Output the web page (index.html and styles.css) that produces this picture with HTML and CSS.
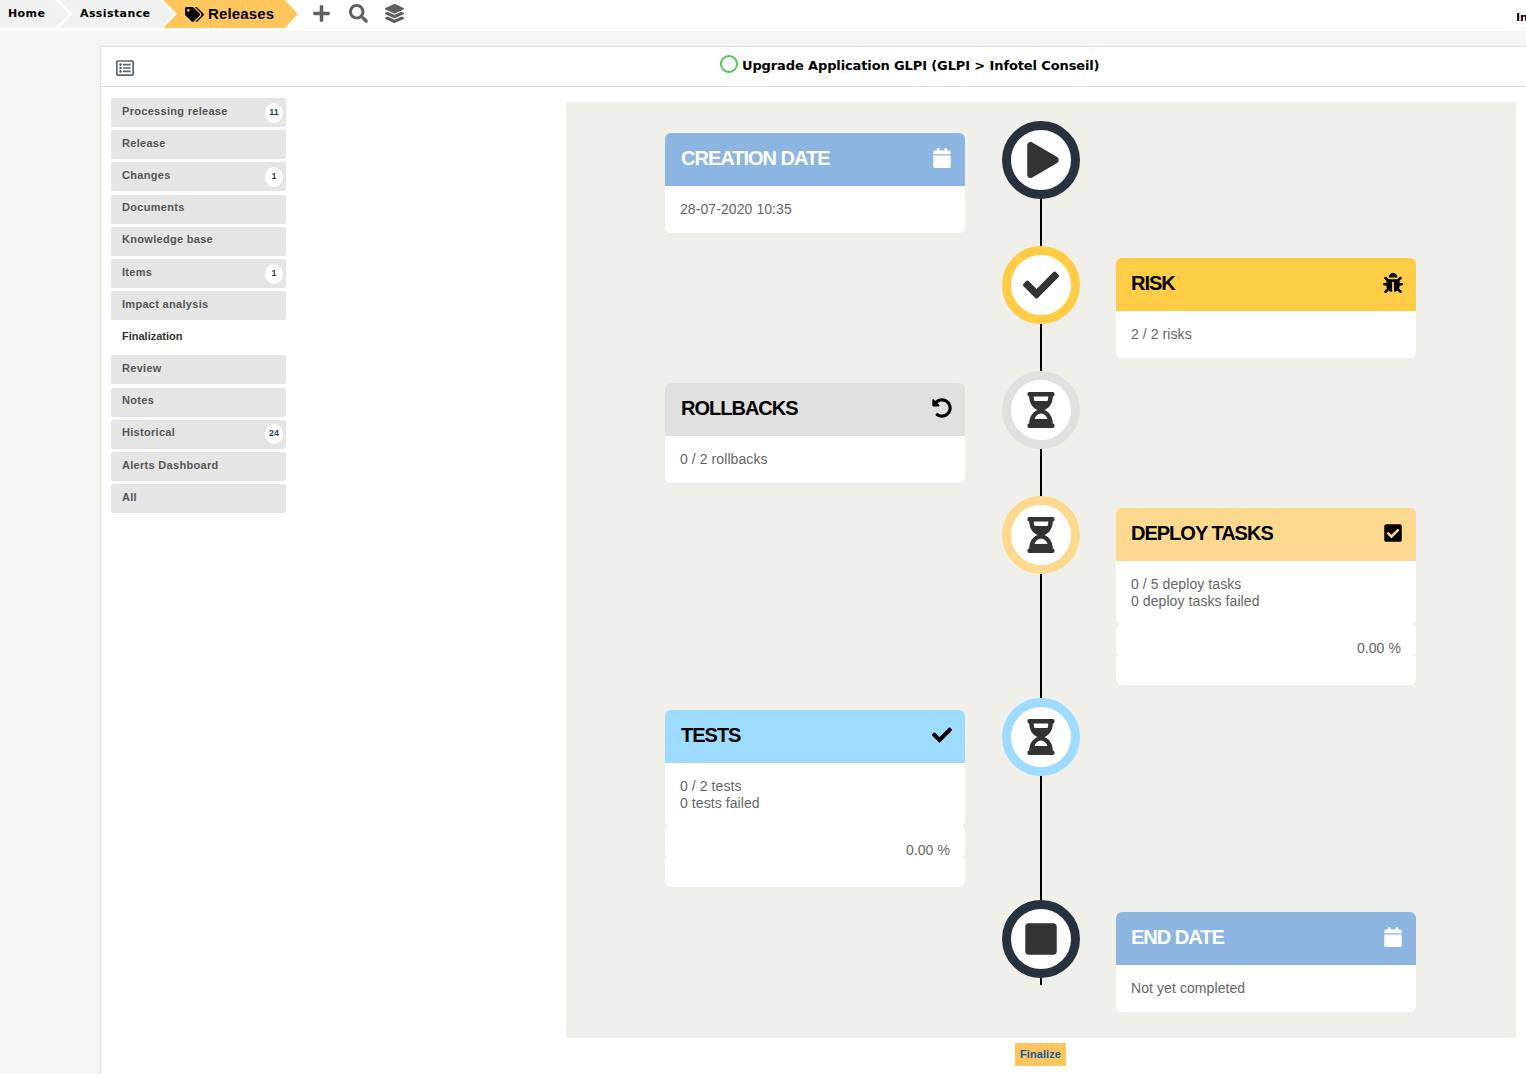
FILE: index.html
```html
<!DOCTYPE html>
<html lang="en">
<head>
    <meta charset="UTF-8">
    <title>Releases - Upgrade Application GLPI</title>
    <link rel="stylesheet" href="styles.css">
</head>
<body>
    <!-- Icon shapes used across the page -->
    <svg class="sprites" xmlns="http://www.w3.org/2000/svg">
        <symbol id="i-calendar" viewBox="0 0 448 512"><path d="M12 192h424c6.6 0 12 5.4 12 12v260c0 26.5-21.5 48-48 48H48c-26.5 0-48-21.5-48-48V204c0-6.6 5.4-12 12-12zm436-44v-36c0-26.5-21.5-48-48-48h-48V12c0-6.6-5.4-12-12-12h-40c-6.6 0-12 5.4-12 12v52H160V12c0-6.6-5.4-12-12-12h-40c-6.6 0-12 5.4-12 12v52H48C21.5 64 0 85.5 0 112v36c0 6.6 5.4 12 12 12h424c6.6 0 12-5.4 12-12z"/></symbol>
        <symbol id="i-check" viewBox="0 0 512 512"><path d="M173.898 439.404l-166.4-166.4c-9.997-9.997-9.997-26.206 0-36.204l36.203-36.204c9.997-9.998 26.207-9.998 36.204 0L192 312.69 432.095 72.596c9.997-9.997 26.207-9.997 36.204 0l36.203 36.204c9.997 9.997 9.997 26.206 0 36.204l-294.4 294.401c-9.998 9.997-26.207 9.997-36.204-.001z"/></symbol>
        <symbol id="i-play" viewBox="0 0 448 512"><path d="M424.4 214.7L72.4 6.6C43.8-10.3 0 6.1 0 47.9V464c0 37.5 40.7 60.1 72.4 41.3l352-208c31.4-18.5 31.5-64.1 0-82.6z"/></symbol>
        <symbol id="i-hourglass" viewBox="0 0 384 512"><path fill-rule="evenodd" d="M360 0H24C10.745 0 0 10.745 0 24v16c0 13.255 10.745 24 24 24 0 90.965 51.016 167.734 120.842 192C75.016 280.266 24 357.035 24 448c-13.255 0-24 10.745-24 24v16c0 13.255 10.745 24 24 24h336c13.255 0 24-10.745 24-24v-16c0-13.255-10.745-24-24-24 0-90.965-51.016-167.734-120.842-192C308.984 231.734 360 154.965 360 64c13.255 0 24-10.745 24-24V24c0-13.255-10.745-24-24-24zm-75.078 384H99.08c17.059-46.797 52.096-80 92.92-80 40.821 0 75.862 33.196 92.922 80zm.019-256H99.078C91.988 108.548 88 86.748 88 64h208c0 22.805-3.987 44.587-11.059 64z"/></symbol>
        <symbol id="i-stop" viewBox="0 0 448 512"><path d="M400 32H48C21.5 32 0 53.5 0 80v352c0 26.5 21.5 48 48 48h352c26.5 0 48-21.5 48-48V80c0-26.5-21.5-48-48-48z"/></symbol>
        <symbol id="i-bug" viewBox="0 0 512 512"><path d="M511.988 288.9c-.478 17.43-15.217 31.1-32.653 31.1H424v16c0 21.864-4.882 42.584-13.6 61.145l60.228 60.228c12.496 12.497 12.496 32.758 0 45.255-12.498 12.497-32.759 12.496-45.256 0l-54.736-54.736C345.886 467.965 314.351 480 280 480V236c0-6.627-5.373-12-12-12h-24c-6.627 0-12 5.373-12 12v244c-34.351 0-65.886-12.035-90.636-32.108l-54.736 54.736c-12.498 12.497-32.759 12.496-45.256 0-12.496-12.497-12.496-32.758 0-45.255l60.228-60.228C92.882 378.584 88 357.864 88 336v-16H32.666C15.23 320 .491 306.33.013 288.9-.484 270.816 14.028 256 32 256h56v-58.745l-46.628-46.628c-12.496-12.497-12.496-32.758 0-45.255 12.498-12.497 32.758-12.497 45.256 0L141.255 160h229.489l54.627-54.627c12.498-12.497 32.758-12.497 45.256 0 12.496 12.497 12.496 32.758 0 45.255L424 197.255V256h56c17.972 0 32.484 14.816 31.988 32.9zM257 0c-61.856 0-112 50.144-112 112h224C369 50.144 318.856 0 257 0z"/></symbol>
        <symbol id="i-undo" viewBox="0 0 512 512"><path d="M255.545 8c-66.269.119-126.438 26.233-170.86 68.685L48.971 40.971C33.851 25.851 8 36.559 8 57.941V192c0 13.255 10.745 24 24 24h134.059c21.382 0 32.09-25.851 16.971-40.971l-41.75-41.75c30.864-28.899 70.801-44.907 113.23-45.273 92.398-.798 170.283 73.977 169.484 169.442C423.236 348.009 349.816 424 256 424c-41.127 0-79.997-14.678-110.63-41.556-4.743-4.161-11.906-3.908-16.368.553L89.34 422.659c-4.872 4.872-4.631 12.815.482 17.433C133.798 479.813 192.074 504 256 504c136.966 0 247.999-111.033 248-247.998C504.001 119.193 392.354 7.755 255.545 8z"/></symbol>
        <symbol id="i-checksquare" viewBox="0 0 448 512"><path fill-rule="evenodd" d="M400 480H48c-26.51 0-48-21.49-48-48V80c0-26.51 21.49-48 48-48h352c26.51 0 48 21.49 48 48v352c0 26.51-21.49 48-48 48zm-204.686-98.059l184-184c6.248-6.248 6.248-16.379 0-22.627l-22.627-22.627c-6.248-6.248-16.379-6.249-22.628 0L184 302.745l-69.059-69.059c-6.248-6.248-16.379-6.248-22.628 0L69.686 256.313c-6.248 6.248-6.248 16.379 0 22.627l104 104c6.249 6.25 16.379 6.25 22.628.001z"/></symbol>
        <symbol id="i-tags" viewBox="0 0 640 512"><path d="M497.941 225.941L286.059 14.059A48 48 0 0 0 252.118 0H48C21.49 0 0 21.49 0 48v204.118a48 48 0 0 0 14.059 33.941l211.882 211.882c18.744 18.745 49.136 18.746 67.882 0l204.118-204.118c18.745-18.745 18.745-49.137 0-67.882zM112 160c-26.51 0-48-21.49-48-48s21.49-48 48-48 48 21.49 48 48-21.49 48-48 48zm513.941 133.823L421.823 497.941c-18.745 18.745-49.137 18.745-67.882 0l-.36-.36L527.64 323.522c16.999-16.999 26.36-39.6 26.36-63.64s-9.362-46.641-26.36-63.64L331.397 0h48.721a48 48 0 0 1 33.941 14.059l211.882 211.882c18.745 18.745 18.745 49.137 0 67.882z"/></symbol>
        <symbol id="i-plus" viewBox="0 0 448 512"><path d="M416 208H272V64c0-17.67-14.33-32-32-32h-32c-17.67 0-32 14.33-32 32v144H32c-17.67 0-32 14.33-32 32v32c0 17.67 14.33 32 32 32h144v144c0 17.67 14.33 32 32 32h32c17.67 0 32-14.33 32-32V304h144c17.67 0 32-14.33 32-32v-32c0-17.67-14.33-32-32-32z"/></symbol>
        <symbol id="i-search" viewBox="0 0 512 512"><path d="M505 442.7L405.3 343c-4.5-4.5-10.6-7-17-7H372c27.6-35.3 44-79.7 44-128C416 93.1 322.9 0 208 0S0 93.1 0 208s93.1 208 208 208c48.3 0 92.7-16.4 128-44v16.3c0 6.4 2.5 12.5 7 17l99.7 99.7c9.4 9.4 24.6 9.4 33.9 0l28.3-28.3c9.4-9.4 9.4-24.6.1-34zM208 336c-70.7 0-128-57.2-128-128 0-70.7 57.2-128 128-128 70.7 0 128 57.2 128 128 0 70.7-57.2 128-128 128z"/></symbol>
        <symbol id="i-layers" viewBox="0 0 512 512"><path d="M12.41 148.02l232.94 105.67c6.8 3.09 14.49 3.09 21.29 0l232.94-105.67c16.55-7.51 16.55-32.52 0-40.03L266.65 2.31a25.607 25.607 0 0 0-21.29 0L12.41 107.98c-16.55 7.51-16.55 32.53 0 40.04zm487.18 88.28l-58.09-26.33-161.64 73.27c-7.56 3.43-15.59 5.17-23.86 5.17s-16.29-1.74-23.86-5.17L70.51 209.97l-58.1 26.33c-16.55 7.5-16.55 32.5 0 40l232.94 105.59c6.8 3.08 14.49 3.08 21.29 0L499.59 276.3c16.55-7.5 16.55-32.5 0-40zm0 127.8l-57.87-26.23-161.86 73.37c-7.56 3.43-15.59 5.17-23.86 5.17s-16.29-1.74-23.86-5.17L70.29 337.87 12.41 364.1c-16.55 7.5-16.55 32.5 0 40l232.94 105.59c6.8 3.08 14.49 3.08 21.29 0L499.59 404.1c16.55-7.5 16.55-32.5 0-40z"/></symbol>
        <symbol id="i-list" viewBox="0 0 512 512"><path d="M464 32H48C21.49 32 0 53.49 0 80v352c0 26.51 21.49 48 48 48h416c26.51 0 48-21.49 48-48V80c0-26.51-21.49-48-48-48zm-6 400H54a6 6 0 0 1-6-6V86a6 6 0 0 1 6-6h404a6 6 0 0 1 6 6v340a6 6 0 0 1-6 6zm-42-92v24c0 6.627-5.373 12-12 12H204c-6.627 0-12-5.373-12-12v-24c0-6.627 5.373-12 12-12h200c6.627 0 12 5.373 12 12zm0-96v24c0 6.627-5.373 12-12 12H204c-6.627 0-12-5.373-12-12v-24c0-6.627 5.373-12 12-12h200c6.627 0 12 5.373 12 12zm0-96v24c0 6.627-5.373 12-12 12H204c-6.627 0-12-5.373-12-12v-24c0-6.627 5.373-12 12-12h200c6.627 0 12 5.373 12 12zm-252 12c0 19.882-16.118 36-36 36s-36-16.118-36-36 16.118-36 36-36 36 16.118 36 36zm0 96c0 19.882-16.118 36-36 36s-36-16.118-36-36 16.118-36 36-36 36 16.118 36 36zm0 96c0 19.882-16.118 36-36 36s-36-16.118-36-36 16.118-36 36-36 36 16.118 36 36z"/></symbol>
    </svg>

    <header class="topbar">
        <nav class="crumbs">
            <a class="crumb crumb-home">Home</a>
            <a class="crumb crumb-mid">Assistance</a>
            <a class="crumb crumb-active"><svg class="crumb-icon"><use href="#i-tags"/></svg>Releases</a>
        </nav>
        <div class="actions">
            <svg class="action"><use href="#i-plus"/></svg>
            <svg class="action"><use href="#i-search"/></svg>
            <svg class="action"><use href="#i-layers"/></svg>
        </div>
        <span class="entity">Infotel Conseil</span>
    </header>

    <main class="panel">
        <div class="panel-header">
            <svg class="list-icon"><use href="#i-list"/></svg>
            <span class="status-dot"></span>
            <h1 class="panel-title">Upgrade Application GLPI (GLPI &gt; Infotel Conseil)</h1>
        </div>
        <div class="panel-body">
            <ul class="tabs">
                <li class="tab">Processing release<span class="badge">11</span></li>
                <li class="tab">Release</li>
                <li class="tab">Changes<span class="badge">1</span></li>
                <li class="tab">Documents</li>
                <li class="tab">Knowledge base</li>
                <li class="tab">Items<span class="badge">1</span></li>
                <li class="tab">Impact analysis</li>
                <li class="tab tab-active">Finalization</li>
                <li class="tab">Review</li>
                <li class="tab">Notes</li>
                <li class="tab">Historical<span class="badge">24</span></li>
                <li class="tab">Alerts Dashboard</li>
                <li class="tab">All</li>
            </ul>
            <section class="content">
                <div class="timeline">
                    <div class="step">
                        <div class="card card-date">
                            <div class="card-head"><span class="card-title">CREATION DATE</span><svg class="head-icon"><use href="#i-calendar"/></svg></div>
                            <div class="card-text">28-07-2020 10:35</div>
                        </div>
                        <div class="node node-dark"><svg class="node-icon node-play"><use href="#i-play"/></svg></div>
                    </div>
                    <div class="step">
                        <div class="node node-risk"><svg class="node-icon"><use href="#i-check"/></svg></div>
                        <div class="card card-risk">
                            <div class="card-head"><span class="card-title">RISK</span><svg class="head-icon"><use href="#i-bug"/></svg></div>
                            <div class="card-text">2 / 2 risks</div>
                        </div>
                    </div>
                    <div class="step">
                        <div class="card card-rollback">
                            <div class="card-head"><span class="card-title">ROLLBACKS</span><svg class="head-icon"><use href="#i-undo"/></svg></div>
                            <div class="card-text">0 / 2 rollbacks</div>
                        </div>
                        <div class="node node-rollback"><svg class="node-icon"><use href="#i-hourglass"/></svg></div>
                    </div>
                    <div class="step">
                        <div class="node node-deploy"><svg class="node-icon"><use href="#i-hourglass"/></svg></div>
                        <div class="card card-deploy">
                            <div class="card-head"><span class="card-title">DEPLOY TASKS</span><svg class="head-icon"><use href="#i-checksquare"/></svg></div>
                            <div class="card-text">0 / 5 deploy tasks<br>0 deploy tasks failed</div>
                            <div class="card-percent">0.00 %</div>
                            <div class="card-foot"></div>
                        </div>
                    </div>
                    <div class="step">
                        <div class="card card-tests">
                            <div class="card-head"><span class="card-title">TESTS</span><svg class="head-icon"><use href="#i-check"/></svg></div>
                            <div class="card-text">0 / 2 tests<br>0 tests failed</div>
                            <div class="card-percent">0.00 %</div>
                            <div class="card-foot"></div>
                        </div>
                        <div class="node node-tests"><svg class="node-icon"><use href="#i-hourglass"/></svg></div>
                    </div>
                    <div class="step">
                        <div class="node node-dark"><svg class="node-icon"><use href="#i-stop"/></svg></div>
                        <div class="card card-date">
                            <div class="card-head"><span class="card-title">END DATE</span><svg class="head-icon"><use href="#i-calendar"/></svg></div>
                            <div class="card-text">Not yet completed</div>
                        </div>
                    </div>
                </div>
                <div class="finalize-row"><button class="finalize" type="button">Finalize</button></div>
            </section>
        </div>
    </main>
</body>
</html>
```

FILE: styles.css
```css
html, body {
    margin: 0;
    padding: 0;
    height: 100%;
    overflow: hidden;
}
body {
    font-family: "DejaVu Sans", Verdana, sans-serif;
    background-color: #f6f5f1;
    color: #000;
}
.sprites {
    display: none;
}

/* top navigation */
.topbar {
    display: flex;
    height: 31px;
    background: #fff;
    overflow: hidden;
}
.crumbs {
    display: flex;
    height: 28px;
}
.crumb {
    display: flex;
    align-items: center;
    height: 28px;
    box-sizing: border-box;
    font-weight: bold;
    font-size: 11px;
    letter-spacing: 0.4px;
    padding-bottom: 2px;
    background: #f1f1f1;
}
.crumb-home {
    width: 69px;
    padding-left: 8px;
    clip-path: polygon(0 0, 55px 0, 100% 50%, 55px 100%, 0 100%);
}
.crumb-mid {
    width: 115px;
    margin-left: -10px;
    padding-left: 21px;
    clip-path: polygon(0 0, 101px 0, 100% 50%, 101px 100%, 0 100%, 14px 50%);
}
.crumb-active {
    width: 135px;
    margin-left: -11px;
    padding-left: 22px;
    font-family: "Liberation Sans", Arial, sans-serif;
    font-size: 15px;
    letter-spacing: 0.15px;
    background: #ffc65d;
    clip-path: polygon(0 0, 122px 0, 100% 50%, 122px 100%, 0 100%, 14px 50%);
}
.crumb-icon {
    width: 19px;
    height: 15px;
    margin-right: 4px;
    margin-top: 2px;
}
.actions {
    display: flex;
    gap: 17.7px;
    margin-left: 14px;
    padding-top: 4px;
    height: 20px;
}
.action {
    width: 19px;
    height: 19px;
    fill: #5f5f5f;
}
.entity {
    width: 10px;
    margin-left: auto;
    padding-top: 11px;
    overflow: hidden;
    font-size: 11px;
    font-weight: bold;
    white-space: nowrap;
}

/* main panel */
.panel {
    margin: 15px 0 0 100px;
    height: 1028px;
    background: #fff;
    border-top: 1px solid #e2e2e2;
    border-left: 1px solid #e2e2e2;
}
.panel-header {
    display: flex;
    align-items: center;
    height: 39px;
    border-bottom: 1px solid #e2e2e2;
}
.list-icon {
    width: 18px;
    height: 18px;
    margin-left: 15px;
    margin-top: 2px;
    fill: #5c6670;
}
.status-dot {
    width: 14px;
    height: 14px;
    margin-left: 586px;
    margin-bottom: 6px;
    border: 2px solid #4cc95a;
    border-radius: 50%;
}
.panel-title {
    margin: 0 0 3px 4px;
    font-size: 13px;
    font-weight: bold;
    letter-spacing: -0.12px;
}
.panel-body {
    display: flex;
}

/* left tabs */
.tabs {
    list-style: none;
    width: 175px;
    margin: 10.95px 0 0 10px;
    padding: 0;
    font-family: "Liberation Sans", Arial, sans-serif;
    font-size: 11px;
    font-weight: bold;
    letter-spacing: 0.3px;
    color: #555;
}
.tab {
    display: flex;
    justify-content: space-between;
    height: 29px;
    box-sizing: border-box;
    margin-bottom: 3.19px;
    padding: 6.65px 3px 0 11px;
    line-height: 13px;
    background: #e5e5e5;
    border-radius: 2px;
}
.tab-active {
    background: #fff;
    color: #333;
    letter-spacing: 0;
}
.badge {
    width: 18px;
    height: 20px;
    margin-top: -2px;
    font-size: 9px;
    line-height: 18px;
    text-align: center;
    letter-spacing: 0;
    background: #fff;
    border-radius: 50%;
    color: #2f3f55;
}

/* timeline */
.content {
    width: 950px;
    margin: 15px 0 0 280px;
}
.timeline {
    position: relative;
    padding: 31px 0 26px 99px;
    background: #f0efea;
}
.timeline::before {
    content: "";
    position: absolute;
    left: 474px;
    top: 19px;
    bottom: 53px;
    width: 2px;
    background: #000;
}
.step {
    display: grid;
    grid-template-columns: 300px 151px 300px;
    margin-bottom: 25px;
}
.step:last-child {
    margin-bottom: 0;
}
.step > .card {
    grid-row: 1;
}
.step > .card-risk, .step > .card-deploy, .step:last-child > .card {
    grid-column: 3;
}
.step > .node {
    grid-column: 2;
    grid-row: 1;
}
.node {
    position: relative;
    display: flex;
    align-items: center;
    justify-content: center;
    justify-self: center;
    width: 60px;
    height: 60px;
    margin-top: -12px;
    background: #fff;
    border: 9px solid #28323e;
    border-radius: 50%;
}
.node-risk { border-color: #ffcd45; }
.node-rollback { border-color: #e0e0e0; }
.node-deploy { border-color: #fdd98f; }
.node-tests { border-color: #9edcff; }
.node-icon {
    width: 36px;
    height: 36px;
    fill: #333;
}
.node-play {
    margin-left: 4px;
}
.card {
    color: #666;
    font-family: "Liberation Sans", Arial, sans-serif;
    font-size: 14px;
    line-height: 17px;
    letter-spacing: 0.08px;
}
.card-head {
    display: flex;
    align-items: center;
    justify-content: space-between;
    height: 53px;
    padding: 0 13px 0 15px;
    color: #000;
    border-radius: 6px 6px 0 0;
}
.card-title {
    margin-bottom: 2px;
    font-size: 20px;
    font-weight: bold;
    letter-spacing: -1px;
}
.card-date .card-title, .card-rollback .card-title, .card-tests .card-title {
    padding-left: 1px;
}
.step:last-child .card-title {
    padding-left: 0;
}
.head-icon {
    width: 20px;
    height: 20px;
    fill: #000;
    margin-top: -3px;
}
.card-date .card-head { background: #8cb6e1; color: #fff; }
.card-date .head-icon { fill: #fff; }
.card-risk .card-head { background: #ffcd45; }
.card-rollback .card-head { background: #e0e0e0; }
.card-deploy .card-head { background: #fdd98f; }
.card-tests .card-head { background: #9edcff; }
.card-text {
    padding: 15px;
    background: #fff;
    border-radius: 0 0 6px 6px;
}
.card-percent {
    height: 30px;
    box-sizing: border-box;
    padding: 15px 15px 0;
    text-align: right;
    background: #fff;
    border-radius: 4px;
}
.card-foot {
    height: 30px;
    background: #fff;
    border-radius: 4px 4px 6px 6px;
}
.finalize-row {
    display: flex;
    justify-content: center;
    padding-top: 5px;
}
.finalize {
    width: 51px;
    height: 23px;
    margin-right: 1px;
    padding: 0 0 2px;
    border: none;
    background: #ffc65d;
    color: #14589e;
    font-family: "Liberation Sans", Arial, sans-serif;
    font-size: 11px;
    font-weight: bold;
    letter-spacing: 0.1px;
}
```
